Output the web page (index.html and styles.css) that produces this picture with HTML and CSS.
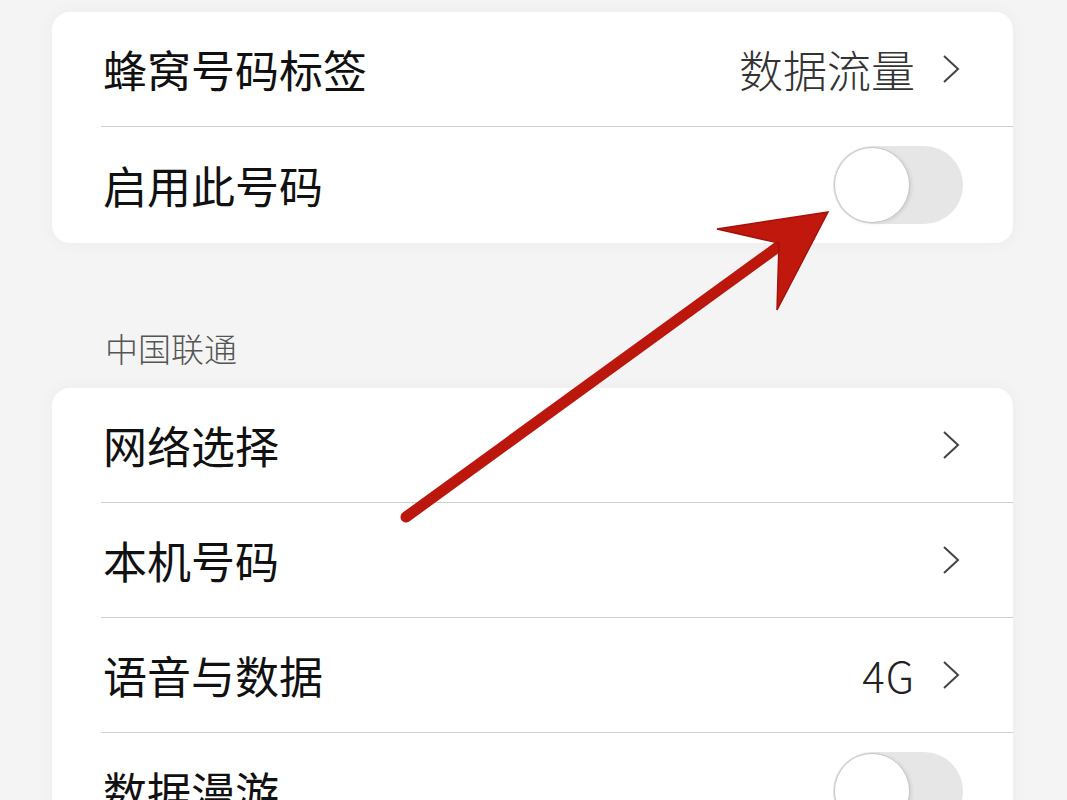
FILE: index.html
```
<!DOCTYPE html>
<html lang="zh-CN">
<head>
    <meta charset="UTF-8">
    <title>SIM 设置</title>
    <link rel="stylesheet" href="styles.css">
</head>
<body>
    <div class="page">
        <div class="card">      <!--号码-->
            <div class="row">
                <span class="label">蜂窝号码标签</span>
                <span class="value">数据流量</span>
                <svg class="chevron" viewBox="0 0 20 30"><polyline points="3,2 17,15 3,28"/></svg>
            </div>
            <div class="row">
                <span class="label">启用此号码</span>
                <span class="switch"><span class="knob"></span></span>
            </div>
        </div>

        <div class="section-title">中国联通</div>

        <div class="card">      <!--运营商-->
            <div class="row">
                <span class="label">网络选择</span>
                <svg class="chevron" viewBox="0 0 20 30"><polyline points="3,2 17,15 3,28"/></svg>
            </div>
            <div class="row">
                <span class="label">本机号码</span>
                <svg class="chevron" viewBox="0 0 20 30"><polyline points="3,2 17,15 3,28"/></svg>
            </div>
            <div class="row">
                <span class="label">语音与数据</span>
                <span class="value latin">4G</span>
                <svg class="chevron" viewBox="0 0 20 30"><polyline points="3,2 17,15 3,28"/></svg>
            </div>
            <div class="row">
                <span class="label">数据漫游</span>
                <span class="switch"><span class="knob"></span></span>
            </div>
        </div>

        <!--红色箭头标注-->
        <svg class="arrow" viewBox="0 0 1067 800">
            <line x1="406" y1="517" x2="786" y2="241"/>
            <polygon points="828,212 717,229 779,243 777,310"/>
        </svg>
    </div>
</body>
</html>
```

FILE: styles.css
```
html, body{
    margin: 0;
    padding: 0;
    background: #f4f4f4;
    font-family: "Noto Sans CJK SC", "Noto Sans", sans-serif;
    color: #111;
}
.page{
    position: relative;
    height: 800px;
    overflow: hidden;
    padding: 12px 54px 0 52px;
    box-sizing: border-box;
}
.card{
    background: #fff;
    border-radius: 18px;
    box-shadow: 0 0 18px rgba(0, 0, 0, 0.04);
}
.row{
    display: flex;
    align-items: center;
    height: 115px;
    margin-left: 49px;
    padding-right: 52px;
    border-bottom: 1px solid #cfcfcf;
    box-sizing: border-box;
}
.card .row:last-child{
    border-bottom: none;
    height: 116px;
}
.label{
    flex: 1;
    font-size: 44px;
    line-height: 50px;
    padding-left: 2px;
}
.value{
    font-size: 44px;
    line-height: 50px;
    font-weight: 300;
    color: #333;
    margin-right: 26px;
}
.value.latin{
    font-size: 42px;
    letter-spacing: 1px;
    color: #222;
}
.chevron{
    width: 20px;
    height: 30px;
    fill: none;
    stroke: #444;
    stroke-width: 2;
}
.switch{
    width: 130px;
    height: 78px;
    border-radius: 39px;
    background: #e6e6e6;
    margin-right: -2px;
    display: flex;
    align-items: center;
}
.knob{
    width: 74px;
    height: 74px;
    border-radius: 50%;
    background: #fff;
    margin-left: 2px;
    box-shadow: 0 0 0 1px #c8c8c8, 2px 1px 4px rgba(0, 0, 0, 0.12);
}
.section-title{
    font-size: 33px;
    line-height: 45px;
    font-weight: 300;
    color: #555;
    padding: 83px 0 17px 53px;
}
.arrow{
    position: absolute;
    left: 0;
    top: 0;
    width: 1067px;
    height: 800px;
}
.arrow line{
    stroke: #bb170c;
    stroke-width: 11;
    stroke-linecap: round;
}
.arrow polygon{
    fill: #c0180d;
    stroke: #a3130a;
    stroke-width: 1.5;
    stroke-linejoin: miter;
}
```
